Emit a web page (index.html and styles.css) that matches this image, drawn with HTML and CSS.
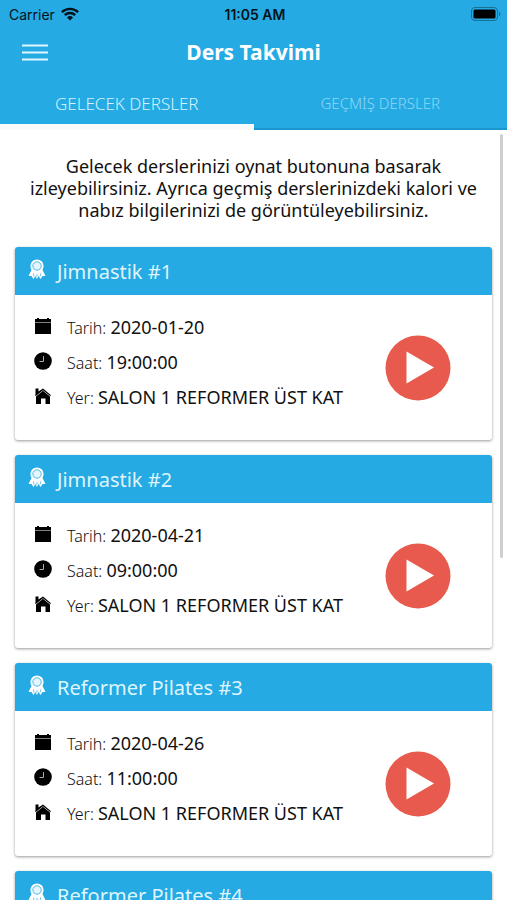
FILE: index.html
```html
<!DOCTYPE html>
<html lang="tr">
<head>
<meta charset="utf-8">
<meta name="viewport" content="width=device-width, initial-scale=1">
<title>Ders Takvimi</title>
<link rel="stylesheet" href="styles.css">
</head>
<body>
<svg class="sprite" aria-hidden="true">
  <symbol id="award" viewBox="0 0 18 21">
    <path d="M4 10 0.500 17 3.500 17 5.500 20 7.500 17 9 20 10.500 17 12.500 20 14.500 17 17.500 17 14 10Z" fill="#fff"/>
    <circle cx="9" cy="7" r="6.600" fill="#fff"/>
    <circle cx="9" cy="7" r="4.200" fill="#e3f5fd" stroke="#25aae4" stroke-width=".8"/>
    <path d="M5.300 14.500 6 17.500M12.700 14.500 12 17.500M9 15V18" stroke="#25aae4" stroke-width=".7"/>
  </symbol>
  <symbol id="calendar" viewBox="0 0 18 18">
    <path d="M1 2H3V1H5V2H13V1H15V2H17V5H1ZM1 5.600H17V17H1Z"/>
  </symbol>
  <symbol id="clock" viewBox="0 0 18 18">
    <circle cx="9" cy="9" r="8.800"/>
    <path d="M9.500 4V9.500H5.500" fill="none" stroke="#aaa" stroke-width="1"/>
  </symbol>
  <symbol id="home" viewBox="0 0 18 18">
    <path d="M1.500 1.500H4.500V4.500L9 1.500 17 8.300 16.200 9 9 3.200 1.800 9 1 8.300 1.500 7.500Z"/>
    <path d="M9 3.800 16 9.500V17H11.500V11.500H7V17H2V9.500Z"/>
  </symbol>
  <symbol id="play" viewBox="0 0 66 66">
    <circle cx="33" cy="33" r="32.500" fill="#e75a4d"/>
    <path d="M21.500 16.500V48.500L49 32.500Z" fill="#fff"/>
  </symbol>
</svg>

<header class="top">
  <div class="status">
    <span class="carrier">Carrier
      <svg width="18" height="14" viewBox="0 0 18 14" aria-hidden="true">
        <g fill="none" stroke="#051219" stroke-width="2.400">
          <path d="M.9 5.200A11.500 11.500 0 0 1 17.100 5.200"/>
          <path d="M3.800 8.200A7.400 7.400 0 0 1 14.200 8.200"/>
        </g>
        <path d="M6 10.400A4.300 4.300 0 0 1 12 10.400L9 13.500Z" fill="#051219"/>
      </svg>
    </span>
    <span class="time">11:05 AM</span>
    <svg class="battery" width="30" height="14" viewBox="0 0 30 14" aria-hidden="true">
      <rect x=".5" y=".5" width="26" height="13" rx="3.500" fill="none" stroke="#176f95"/>
      <rect x="2.500" y="2.500" width="22" height="9" rx="1.500"/>
      <path d="M28 4.500Q31 7 28 9.500Z" fill="#176f95"/>
    </svg>
  </div>
  <div class="bar">
    <button class="menu" type="button" aria-label="Menü">
      <svg width="26" height="17" viewBox="0 0 26 17" aria-hidden="true"><path d="M0 1.500H26M0 8.500H26M0 15.500H26" stroke="#e0f7fd" stroke-width="2"/></svg>
    </button>
    <h1>Ders Takvimi</h1>
  </div>
  <nav class="tabs">
    <button class="tab active" type="button">GELECEK DERSLER</button>
    <button class="tab" type="button">GEÇMİŞ DERSLER</button>
  </nav>
</header>

<div class="frame">
  <main>
    <p class="intro">Gelecek derslerinizi oynat butonuna basarak izleyebilirsiniz. Ayrıca geçmiş derslerinizdeki kalori ve nabız bilgilerinizi de görüntüleyebilirsiniz.</p>
    <article class="card">
      <h2><svg><use href="#award"/></svg>Jimnastik #1</h2>
      <div class="body">
        <ul>
          <li><svg><use href="#calendar"/></svg><span>Tarih: <b>2020-01-20</b></span></li>
          <li><svg><use href="#clock"/></svg><span>Saat: <b>19:00:00</b></span></li>
          <li><svg><use href="#home"/></svg><span>Yer: <b>SALON 1 REFORMER ÜST KAT</b></span></li>
        </ul>
        <button class="play" type="button" aria-label="Oynat"><svg><use href="#play"/></svg></button>
      </div>
    </article>
    <article class="card">
      <h2><svg><use href="#award"/></svg>Jimnastik #2</h2>
      <div class="body">
        <ul>
          <li><svg><use href="#calendar"/></svg><span>Tarih: <b>2020-04-21</b></span></li>
          <li><svg><use href="#clock"/></svg><span>Saat: <b>09:00:00</b></span></li>
          <li><svg><use href="#home"/></svg><span>Yer: <b>SALON 1 REFORMER ÜST KAT</b></span></li>
        </ul>
        <button class="play" type="button" aria-label="Oynat"><svg><use href="#play"/></svg></button>
      </div>
    </article>
    <article class="card">
      <h2><svg><use href="#award"/></svg>Reformer Pilates #3</h2>
      <div class="body">
        <ul>
          <li><svg><use href="#calendar"/></svg><span>Tarih: <b>2020-04-26</b></span></li>
          <li><svg><use href="#clock"/></svg><span>Saat: <b>11:00:00</b></span></li>
          <li><svg><use href="#home"/></svg><span>Yer: <b>SALON 1 REFORMER ÜST KAT</b></span></li>
        </ul>
        <button class="play" type="button" aria-label="Oynat"><svg><use href="#play"/></svg></button>
      </div>
    </article>
    <article class="card">
      <h2><svg><use href="#award"/></svg>Reformer Pilates #4</h2>
    </article>
  </main>
  <div class="thumb"></div>
</div>
</body>
</html>
```

FILE: styles.css
```css
* { box-sizing: border-box; }

body {
  margin: 0;
  height: 100vh;
  display: flex;
  flex-direction: column;
  overflow: hidden;
  background: #fff;
  color: #111;
  font-family: "Noto Sans", "Open Sans", sans-serif;
}

button {
  border: 0;
  padding: 0;
  background: none;
  font-family: inherit;
  cursor: pointer;
}

svg { display: block; flex: none; }
.sprite { position: absolute; width: 0; height: 0; }

.top { background: #25aae4; flex: none; }

.status {
  display: grid;
  grid-template-columns: 1fr auto 1fr;
  align-items: center;
  height: 28px;
  padding: 0 6px 0 9px;
  color: #051219;
  font-family: Inter, sans-serif;
  font-size: 14px;
}
.carrier { display: flex; align-items: center; gap: 6px; }
.time { font-weight: 600; }
.battery { justify-self: end; }

.bar {
  display: grid;
  grid-template-columns: 48px 1fr 48px;
  align-items: center;
  height: 48px;
  padding: 0 16px;
}
.menu { height: 40px; padding-left: 6px; }
h1 {
  margin: 0;
  color: #fff;
  font-size: 21px;
  line-height: 28px;
  font-weight: 700;
  text-align: center;
}

.tabs { display: grid; grid-template-columns: 1fr 1fr; height: 54px; }
.tab {
  padding-top: 2px;
  border-bottom: 2px solid #1c96cf;
  color: #8ed8f3;
  font-size: 15px;
  font-weight: 300;
}
.tab.active {
  padding-top: 6px;
  border-bottom: 6px solid #fafafa;
  color: #d3f2fc;
  font-size: 17px;
}

.frame { position: relative; flex: 1; min-height: 0; }
main {
  height: 100%;
  overflow-y: auto;
  scrollbar-width: none;
  display: flex;
  flex-direction: column;
  gap: 15px;
  padding: 25px 15px 0;
}
.thumb {
  position: absolute;
  top: 4px;
  right: 4px;
  width: 3px;
  height: 55%;
  border-radius: 2px;
  background: #cfcfcf;
}

.intro {
  margin: 0 0 11px;
  font-size: 18px;
  line-height: 22px;
  text-align: center;
}

.card {
  flex: none;
  border-radius: 3px;
  background: #fff;
  box-shadow: 0 1px 3px rgba(0, 0, 0, .4);
}
h2 {
  display: flex;
  align-items: center;
  gap: 11px;
  height: 48px;
  margin: 0;
  padding: 0 13px;
  border-radius: 3px 3px 0 0;
  background: #25aae4;
  color: #dff5fd;
  font-size: 20px;
  font-weight: 400;
}
h2 svg { width: 18px; height: 21px; margin-bottom: 4px; }

.body {
  display: flex;
  align-items: center;
  justify-content: space-between;
  height: 145px;
  padding: 0 41px 0 19px;
}
ul {
  margin: 0;
  padding: 0 0 12px;
  list-style: none;
}
li {
  display: flex;
  align-items: center;
  gap: 15px;
  height: 35px;
  font-size: 16px;
  font-weight: 300;
  white-space: nowrap;
}
li svg { width: 18px; height: 18px; margin-bottom: 2px; }
b { font-size: 18px; font-weight: 400; }

.play svg { width: 66px; height: 66px; }
```
